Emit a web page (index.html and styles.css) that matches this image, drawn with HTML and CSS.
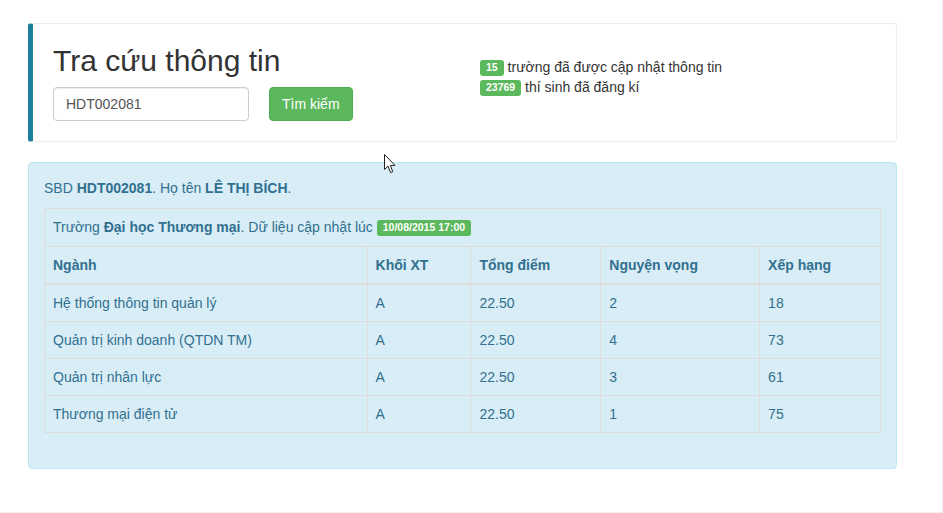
FILE: index.html
```html
<!DOCTYPE html>
<html lang="vi">
<head>
<meta charset="utf-8">
<title>Tra cứu thông tin</title>
<link rel="stylesheet" href="styles.css">
</head>
<body>
<div class="page">
  <div class="callout">
    <div class="search-col">
      <h2 class="title">Tra cứu thông tin</h2>
      <form class="search-form">
        <input class="search-input" type="text" value="HDT002081">
        <button class="btn-success" type="button">Tìm kiếm</button>
      </form>
    </div>
    <div class="stats-col">
      <div class="stat"><span class="label">15</span> trường đã được cập nhật thông tin</div>
      <div class="stat"><span class="label">23769</span> thí sinh đã đăng kí</div>
    </div>
  </div>

  <div class="alert-info">
    <p class="student">SBD <b>HDT002081</b>. Họ tên <b>LÊ THỊ BÍCH</b>.</p>
    <table class="result-table">
      <thead>
        <tr class="caption-row">
          <td colspan="5">Trường <b>Đại học Thương mại</b>. Dữ liệu cập nhật lúc <span class="label">10/08/2015 17:00</span></td>
        </tr>
        <tr class="head-row">
          <th class="c1">Ngành</th>
          <th class="c2">Khối XT</th>
          <th class="c3">Tổng điểm</th>
          <th class="c4">Nguyện vọng</th>
          <th class="c5">Xếp hạng</th>
        </tr>
      </thead>
      <tbody>
        <tr><td>Hệ thống thông tin quản lý</td><td>A</td><td>22.50</td><td>2</td><td>18</td></tr>
        <tr><td>Quản trị kinh doanh (QTDN TM)</td><td>A</td><td>22.50</td><td>4</td><td>73</td></tr>
        <tr><td>Quản trị nhân lực</td><td>A</td><td>22.50</td><td>3</td><td>61</td></tr>
        <tr><td>Thương mại điện tử</td><td>A</td><td>22.50</td><td>1</td><td>75</td></tr>
      </tbody>
    </table>
  </div>

  <svg class="cursor" width="13" height="20" viewBox="0 0 13 20" aria-hidden="true">
    <path d="M0.5 0.5 L0.5 15.5 L4 12.2 L6.6 18.6 L8.8 17.7 L6.3 11.4 L11 11.4 Z" fill="#fff" stroke="#222" stroke-width="1" stroke-linejoin="round"/>
  </svg>
</div>
</body>
</html>
```

FILE: styles.css
```css
* { box-sizing: border-box; }

html, body {
  margin: 0;
  padding: 0;
  background: #fff;
}

body {
  font-family: "Liberation Sans", Arial, Helvetica, sans-serif;
  font-size: 14px;
  line-height: 20px;
  color: #333;
}

.page {
  position: relative;
  width: 943px;
  height: 513px;
  padding: 23px 45px 0 28px;
  border-right: 1px solid #f1f1f1;
  border-bottom: 1px solid #f1f1f1;
  overflow: hidden;
}

.callout {
  display: flex;
  height: 119px;
  border: 1px solid #eee;
  border-left: 5px solid #1b809e;
  border-radius: 3px;
  padding: 20px 20px 20px 20px;
}

.search-col {
  width: 427px;
  flex: none;
}

.title {
  margin: 0;
  font-size: 30px;
  font-weight: 500;
  line-height: 33px;
  color: #333;
}

.search-form {
  display: flex;
  gap: 20px;
  margin-top: 10px;
}

.search-input {
  width: 196px;
  height: 34px;
  padding: 6px 12px;
  font-family: inherit;
  font-size: 14px;
  color: #555;
  border: 1px solid #ccc;
  border-radius: 4px;
  box-shadow: inset 0 1px 1px rgba(0,0,0,.075);
  background: #fff;
}

.btn-success {
  height: 34px;
  padding: 6px 12px;
  font-family: inherit;
  font-size: 14px;
  line-height: 20px;
  color: #fff;
  background: #5cb85c;
  border: 1px solid #4cae4c;
  border-radius: 4px;
}

.stats-col {
  padding-top: 13px;
}

.stat {
  line-height: 20px;
  color: #333;
}

.label {
  display: inline-block;
  padding: 2px 6px 3px;
  font-size: 10.5px;
  font-weight: bold;
  line-height: 1;
  color: #fff;
  background: #5cb85c;
  border-radius: 3px;
  vertical-align: 1px;
}

.alert-info {
  margin-top: 20px;
  height: 307px;
  padding: 15px;
  background: #d9edf7;
  border: 1px solid #bce8f1;
  border-radius: 4px;
  color: #31708f;
}

.student {
  margin: 0 0 10px;
}

.result-table {
  width: 837px;
  border-collapse: collapse;
  border: 1px solid #ddd;
}

.result-table td,
.result-table th {
  padding: 8px;
  border: 1px solid #ddd;
  text-align: left;
  vertical-align: top;
  line-height: 20px;
}

.result-table th {
  font-weight: bold;
  border-bottom-width: 2px;
}

.caption-row td {
  padding-bottom: 9px;
}

.caption-row .label {
  vertical-align: 1px;
}

.c1 { width: 323px; }
.c2 { width: 104px; }
.c3 { width: 130px; }
.c4 { width: 159px; }
.c5 { width: 121px; }

.cursor {
  position: absolute;
  left: 384px;
  top: 154px;
}
```
